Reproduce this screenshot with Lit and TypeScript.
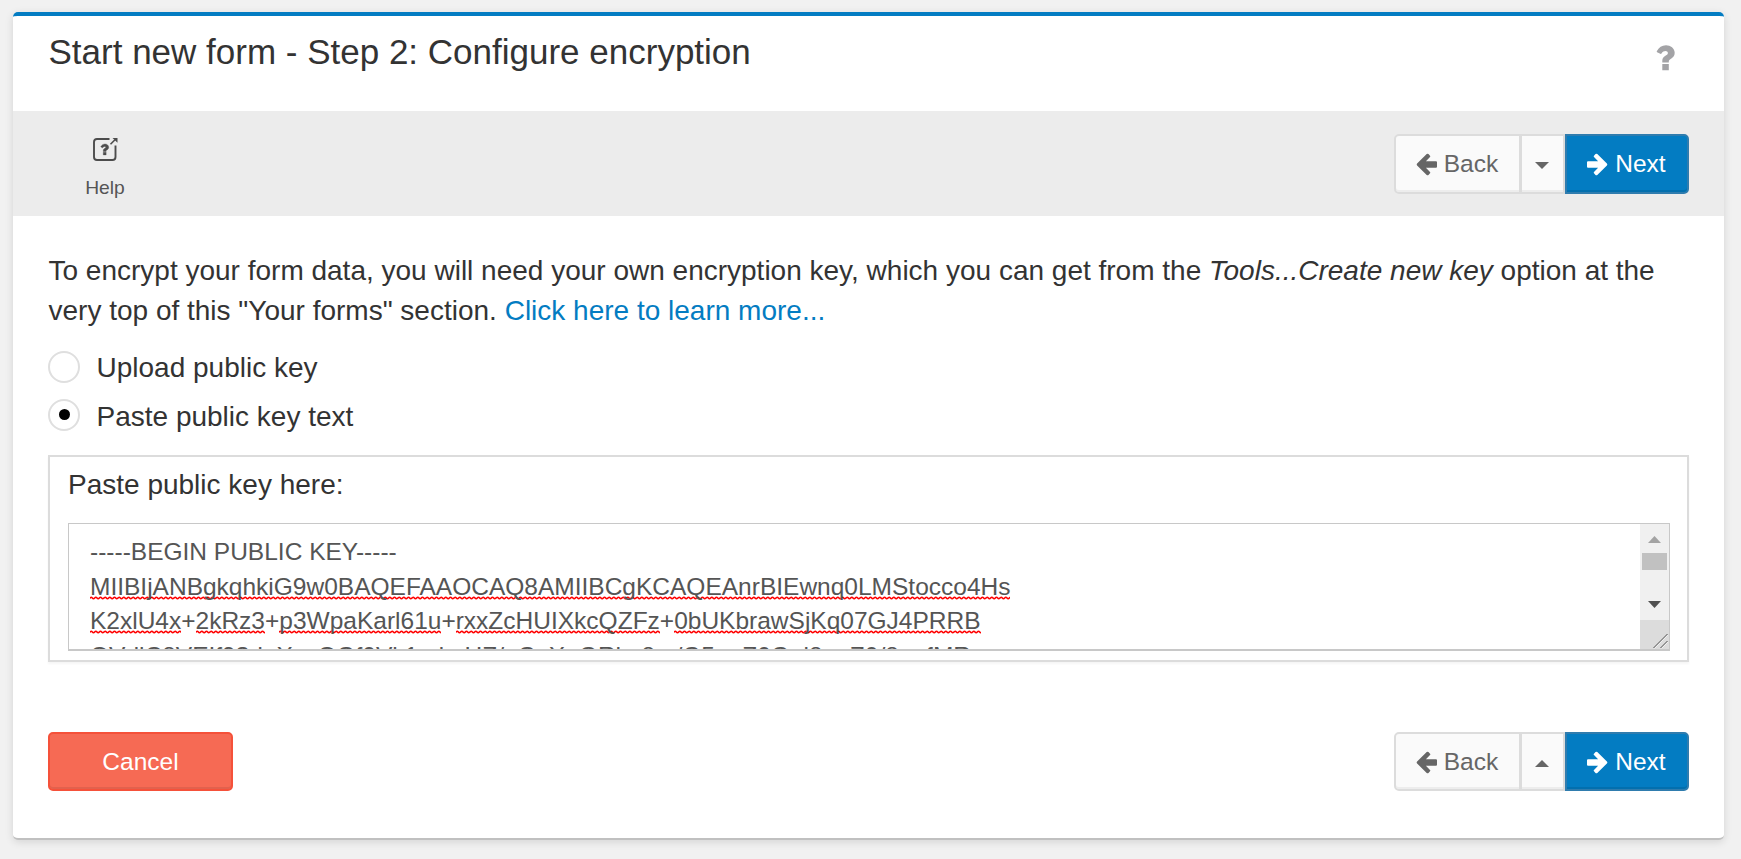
import { LitElement, html, css, svg } from "lit";
import { customElement, property } from "lit/decorators.js";

const buttonStyles = css`
  * { box-sizing: border-box; }
  .btn {
    display: flex; align-items: center; justify-content: center; margin: 0;
    font: 24.5px/35px "Liberation Sans", Arial, sans-serif; letter-spacing: 0;
    border: 2px solid #dcdcdc; background: #fafafa; color: #666;
    box-shadow: inset 0 -2px 0 rgba(0, 0, 0, 0.05);
  }
`;

const questionMark = "M0.8 6.3Q3.8 0.3 10 0.3C14.5 0.3 18.7 3.4 18.7 7.8C18.7 13.6 12.8 13.6 12.8 16.4V17.5H6.3V15.7C6.3 10.5 11.9 11 11.9 8.1C11.9 5.6 7.6 5.1 5.5 8.5Q5 9.2 4.3 8.8L1.1 7.3Q.5 6.9 .8 6.3ZM6.3 19.1H12.8V25.2H6.3Z";

@customElement("nav-buttons")
class NavButtons extends LitElement {
  @property() direction = "down";
  static styles = [buttonStyles, css`
    :host { display: flex; height: 60px; }
    :host([direction="up"]) { height: 59px; }
    .btn { padding: 0 2px 2px 0; }
    .back { width: 127px; border-radius: 5px 0 0 5px; }
    .caret { width: 44px; border-left-width: 1px; padding: 0 2px 1px 0; }
    .next { width: 124px; border-radius: 0 5px 5px 0; color: #fff; background: #037cc2; border-color: #2f7cae; box-shadow: inset 0 -2px 0 rgba(0, 0, 0, 0.1); }
    .arrow { width: 23px; height: 23px; margin: 2px 6px 0 0; fill: currentColor; }
    .flip { transform: scaleX(-1); }
    .tri { width: 14px; height: 7px; fill: #666; margin-top: 4px; }
    :host([direction="up"]) .btn { padding-bottom: 1px; }
  `];
  render() {
    const arrow = svg`<path d="M1 9.2Q1 8.2 2 8.2H12.1L8 4.1Q7.3 3.4 8 2.7L9.5 1.1Q10.4 .3 11.3 1.1L20.9 10.6Q21.8 11.5 20.9 12.4L11.3 21.9Q10.4 22.7 9.5 21.9L8 20.3Q7.3 19.6 8 18.9L12.1 14.8H2Q1 14.8 1 13.8Z"/>`;
    return html`
      <button class="btn back"><svg class="arrow flip" viewBox="0 0 23 23">${arrow}</svg>Back</button>
      <button class="btn caret"><svg class="tri" viewBox="0 0 14 7"><path d=${this.direction === "up" ? "M0 7L7 0L14 7Z" : "M0 0H14L7 7Z"}/></svg></button>
      <button class="btn next"><svg class="arrow" viewBox="0 0 23 23">${arrow}</svg>Next</button>`;
  }
}

@customElement("app-root")
class AppRoot extends LitElement {
  static styles = [buttonStyles, css`
    :host {
      display: block; height: 859px; box-sizing: border-box; padding: 12px 17px 19px 13px; background: #f1f1f1;
      font: 28px/40px "Liberation Sans", Arial, sans-serif; color: #333; overflow: hidden;
    }
    .card {
      height: 828px; background: #fff; border-top: 4px solid #037cc2; border-bottom: 2px solid #c0c0c0;
      border-radius: 5px; box-shadow: 0 2px 9px rgba(0, 0, 0, 0.12); display: flex; flex-direction: column;
    }
    .head { height: 95px; display: flex; justify-content: space-between; padding: 15px 49.5px 0 35.5px; }
    h1 { margin: 0; font-size: 35px; line-height: 42px; font-weight: 400; }
    .q { width: 19px; height: 26px; margin-top: 14px; fill: #a3a3a6; }
    .bar { height: 105px; background: #ececec; display: flex; justify-content: space-between; padding: 23px 35px 0 60px; }
    .help { width: 64px; display: flex; flex-direction: column; align-items: center; font-size: 19.25px; line-height: 28px; color: #555; }
    .help svg { width: 26px; height: 24px; margin: 3px 0 13px; }
    .body { padding: 35px 35px 0; }
    p { margin: 0; height: 80px; white-space: nowrap; padding-left: 0.5px; }
    .link { color: #037cc2; }
    .opts { padding-top: 13px; height: 108px; }
    .opt { display: flex; align-items: center; height: 48px; gap: 16.5px; }
    .opt + .opt { line-height: 42px; }
    .radio { width: 32px; height: 32px; border: 2px solid #dfdfdf; border-radius: 50%; display: grid; place-items: center; margin-top: -3px; }
    .dot { width: 11px; height: 11px; border-radius: 50%; background: #000; }
    .low { padding-top: 1px; }
    .panel { margin-top: 16px; height: 207px; border: 2px solid #dcdcdc; box-shadow: 0 2px 2px rgba(0,0,0,.04); padding: 8px 17px 0 18px; }
    .area { margin-top: 18px; height: 128px; border: 1px solid #c8c8c8; border-bottom-width: 2px; display: flex; overflow: hidden; }
    .text { flex: 1; padding: 11px 0 0 21px; font-size: 24.5px; line-height: 34.7px; color: #555; white-space: nowrap; overflow: hidden; }
    .sp {
      background: url("data:image/svg+xml,%3Csvg xmlns='http://www.w3.org/2000/svg' width='14' height='4' viewBox='0 0 14 4'%3E%3Cpath d='M-2.33 2Q-1.17 3.4 0 2T2.33 2T4.67 2T7 2T9.33 2T11.67 2T14 2T16.33 2' fill='none' stroke='red' stroke-width='1.6'/%3E%3C/svg%3E") 0 100% / 14px 4px repeat-x;
    }
    .scroll { width: 29px; background: #f0f0f0; display: flex; flex-direction: column; align-items: center; }
    .scroll svg { display: block; flex: none; }
    .up { width: 13px; height: 7px; margin: 12px 0 10px; fill: #a3a3a3; }
    .thumb { width: 25px; height: 17px; background: #c1c1c1; }
    .down { width: 13px; height: 7px; margin: 31px 0 12px; fill: #505050; }
    .grip { width: 29px; height: 29px; background: #dcdcdc; stroke: #505050; }
    .foot { display: flex; justify-content: space-between; margin-top: 70px; }
    .cancel { width: 185px; height: 59px; color: #fff; background: #f66a54; border-color: #f5513a; border-radius: 5px; box-shadow: inset 0 -2px 0 rgba(0,0,0,.08); padding-bottom: 2px; }
  `];
  render() {
    return html`<main class="card">
      <header class="head"><h1>Start new form - Step 2: Configure encryption</h1>
        <svg class="q" viewBox="0 0 19 26"><path d=${questionMark} /></svg></header>
      <div class="bar"><div class="help">
        <svg viewBox="0 0 26 24" fill="none" stroke="#4c4c4c" stroke-width="1.9"><path d="M17.5 2H5Q2 2 2 5V20Q2 23 5 23H20.5Q23.5 23 23.5 20V8.5"/><path d="M18.5 7.3L23 2.8" stroke-width="1.6"/><path d="M20.5 1H25.5V5.8Z" fill="#4c4c4c" stroke="none"/><path transform="translate(8.5 6.8) scale(.44)" d=${questionMark} fill="#4c4c4c" stroke="#4c4c4c" stroke-width=".8"/></svg>
        Help</div><nav-buttons direction="down"></nav-buttons></div>
      <section class="body">
        <p>To encrypt your form data, you will need your own encryption key, which you can get from the <i>Tools...Create new key</i> option at the<br>very top of this "Your forms" section. <span class="link">Click here to learn more...</span></p>
        <div class="opts"><label class="opt"><span class="radio"></span>Upload public key</label>
        <label class="opt"><span class="radio"><span class="dot"></span></span><span class="low">Paste public key text</span></label></div>
        <div class="panel">Paste public key here:
          <div class="area"><div class="text">-----BEGIN PUBLIC KEY-----<br><span class="sp">MIIBIjANBgkqhkiG9w0BAQEFAAOCAQ8AMIIBCgKCAQEAnrBIEwnq0LMStocco4Hs</span><br><span class="sp">K2xlU4x</span>+<span class="sp">2kRz3</span>+<span class="sp">p3WpaKarl61u</span>+<span class="sp">rxxZcHUIXkcQZFz</span>+<span class="sp">0bUKbrawSjKq07GJ4PRRB</span><br>QVdlC8VEIf93deXxxQGf0Vk1cdcrHZ/aGcXnGRhx8rs/G5aaZ0Gal8aaZ0/8aafMR</div>
          <div class="scroll"><svg class="up" viewBox="0 0 13 7"><path d="M0 7L6.5 0L13 7Z"/></svg><div class="thumb"></div><svg class="down" viewBox="0 0 13 7"><path d="M0 0H13L6.5 7Z"/></svg><svg class="grip" viewBox="0 0 29 29"><path d="M13.5 28L27.5 14M20.5 28L27.5 21"/><path d="M14.5 28.5L28 15M21.5 28.5L28 22" stroke="#f5f5f5" stroke-width=".8"/></svg></div></div></div>
        <footer class="foot"><button class="btn cancel">Cancel</button><nav-buttons direction="up"></nav-buttons></footer>
      </section></main>`;
  }
}
